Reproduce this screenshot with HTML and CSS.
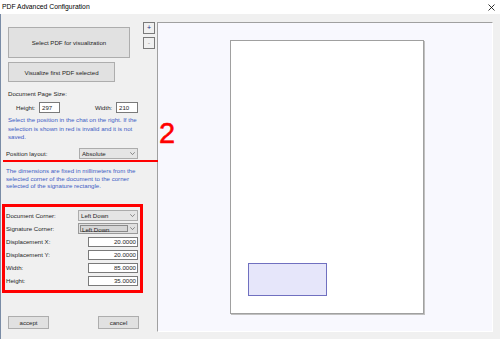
FILE: index.html
```html
<!DOCTYPE html>
<html>
<head>
<meta charset="utf-8">
<title>PDF Advanced Configuration</title>
<link rel="stylesheet" href="styles.css">
</head>
<body>
<div class="titlebar">
  <span class="title">PDF Advanced Configuration</span>
  <svg class="close" viewBox="0 0 7 7"><path d="M0.5 0.5 L6.5 6.5 M6.5 0.5 L0.5 6.5" stroke="#000" stroke-width="0.8" fill="none"/></svg>
</div>
<div class="main">
  <div class="left">
    <button class="btn btn-select">Select PDF for visualization</button>
    <button class="btn btn-visualize">Visualize first PDF selected</button>
    <div class="section-title">Document Page Size:</div>
    <div class="size-row">
      <span class="lbl lbl-height">Height:</span><span class="input input-h">297</span>
      <span class="lbl lbl-width">Width:</span><span class="input input-w">210</span>
    </div>
    <p class="hint hint1">Select the position in the chat on the right. If the<br>selection is shown in red is invalid and it is not<br>saved.</p>
    <div class="field-row pos-row">
      <span class="lbl">Position layout:</span>
      <span class="combo combo-pos"><span class="combo-text">Absolute</span><svg class="chev" viewBox="0 0 5 3"><path d="M0.3 0.3 L2.5 2.6 L4.7 0.3" stroke="#606060" stroke-width="0.7" fill="none"/></svg></span>
    </div>
    <p class="hint hint2">The dimensions are fixed in millimeters from the<br>selected corner of the document to the corner<br>selected of the signature rectangle.</p>
    <div class="redbox">
      <div class="field-row r1">
        <span class="lbl">Document Corner:</span>
        <span class="combo combo-wide"><span class="combo-text">Left Down</span><svg class="chev" viewBox="0 0 5 3"><path d="M0.3 0.3 L2.5 2.6 L4.7 0.3" stroke="#606060" stroke-width="0.7" fill="none"/></svg></span>
      </div>
      <div class="field-row r2">
        <span class="lbl">Signature Corner:</span>
        <span class="combo combo-wide combo-focus"><span class="combo-text">Left Down</span><span class="arrow-box"><svg class="chev" viewBox="0 0 5 3"><path d="M0.3 0.3 L2.5 2.6 L4.7 0.3" stroke="#606060" stroke-width="0.7" fill="none"/></svg></span></span>
      </div>
      <div class="field-row num-row">
        <span class="lbl">Displacement X:</span><span class="input input-num">20.0000</span>
      </div>
      <div class="field-row num-row">
        <span class="lbl">Displacement Y:</span><span class="input input-num">20.0000</span>
      </div>
      <div class="field-row num-row">
        <span class="lbl">Width:</span><span class="input input-num">85.0000</span>
      </div>
      <div class="field-row num-row">
        <span class="lbl">Height:</span><span class="input input-num">35.0000</span>
      </div>
    </div>
    <div class="actions">
      <button class="btn btn-small">accept</button>
      <button class="btn btn-small">cancel</button>
    </div>
  </div>
  <div class="zoom">
    <button class="zbtn zplus">+</button>
    <button class="zbtn zminus">-</button>
  </div>
  <div class="canvas">
    <div class="page">
      <div class="sig"></div>
    </div>
  </div>
</div>
<div class="anno-line"></div>
<div class="anno-2">2</div>
</body>
</html>
```

FILE: styles.css
```css
* {
  box-sizing: border-box;
  margin: 0;
  padding: 0;
}

html, body {
  width: 500px;
  height: 339px;
  overflow: hidden;
}

body {
  background: #f0f0f0;
  font-family: "Liberation Sans", Arial, sans-serif;
  color: #1e1e1e;
  position: relative;
}

.titlebar {
  height: 14px;
  background: #fff;
  display: flex;
  align-items: center;
  justify-content: space-between;
  padding: 0 5px 0 2px;
}

.title {
  font-size: 6.8px;
  line-height: 14px;
  color: #000;
}

.close {
  width: 7px;
  height: 7px;
}

.main {
  display: flex;
  align-items: flex-start;
  height: 325px;
}

.left {
  width: 143px;
  height: 325px;
  border-left: 1px solid #7a8ca6;
  padding: 13px 0 0 7px;
  display: flex;
  flex-direction: column;
  align-items: flex-start;
  font-size: 6.1px;
}

.btn {
  font-family: "Liberation Sans", Arial, sans-serif;
  font-size: 6.1px;
  color: #1e1e1e;
  background: #e1e1e1;
  border: 1px solid #adadad;
  display: flex;
  align-items: center;
  justify-content: center;
}

.btn-select {
  width: 122px;
  height: 31px;
}

.btn-visualize {
  width: 107px;
  height: 20px;
  margin-top: 4px;
}

.section-title {
  margin-top: 8px;
  height: 8px;
  line-height: 8px;
}

.size-row {
  margin-top: 4px;
  height: 11px;
  display: flex;
  align-items: center;
}

.lbl {
  white-space: nowrap;
  line-height: 8px;
}

.lbl-height {
  width: 31px;
  padding-left: 8px;
}

.lbl-width {
  width: 21px;
  margin-left: 35px;
}

.input {
  background: #fff;
  border: 1px solid #7a7a7a;
  height: 11px;
  line-height: 9px;
  padding: 0 2px;
  white-space: nowrap;
}

.input-h {
  width: 21px;
}

.input-w {
  width: 22px;
}

.hint {
  color: #3d5cc4;
  white-space: nowrap;
}

.hint1 {
  margin-top: 3px;
  line-height: 8.5px;
}

.field-row {
  display: flex;
  justify-content: space-between;
  align-items: center;
  height: 11px;
}

.pos-row {
  margin-top: 6.5px;
  margin-left: -2px;
  width: 132px;
}

.combo {
  height: 11px;
  background: #e5e5e5;
  border: 1px solid #acacac;
  display: flex;
  align-items: center;
  justify-content: space-between;
  padding: 0 2px 0 2px;
  line-height: 9px;
}

.combo-pos {
  width: 59px;
}

.chev {
  width: 5px;
  height: 3px;
  flex: none;
}

.hint2 {
  margin-top: 8.25px;
  margin-left: -2px;
  line-height: 7.5px;
}

.redbox {
  margin-top: 14.25px;
  margin-left: -6px;
  width: 141px;
  height: 89px;
  border: 3px solid #ff0000;
  padding: 3px 2px 0 1px;
  display: flex;
  flex-direction: column;
}

.combo-wide {
  width: 60px;
}

.r2 {
  margin-top: 2px;
}

.combo-focus {
  padding: 1px;
  background: #e0e0e0;
  border-color: #9a9a9a;
}

.combo-focus .combo-text {
  flex: 1;
  height: 100%;
  background: #d6d6d6;
  border: 1px solid #8a8a8a;
  line-height: 7px;
  padding-left: 1px;
  margin-right: 2px;
}

.arrow-box {
  display: flex;
  align-items: center;
  padding-right: 1px;
}

.num-row {
  margin-top: 3px;
  height: 10px;
}

.input-num {
  width: 50px;
  height: 10px;
  line-height: 8px;
  text-align: right;
  padding-right: 1px;
}

.actions {
  margin-top: 23px;
  width: 131px;
  display: flex;
  justify-content: space-between;
}

.btn-small {
  width: 41px;
  height: 13px;
}

.zoom {
  width: 14px;
  padding-top: 8px;
  display: flex;
  flex-direction: column;
  gap: 3px;
}

.zbtn {
  width: 12px;
  height: 12px;
  border: 1px solid #7a7a7a;
  background: #f0f0f0;
  font-family: "Liberation Sans", Arial, sans-serif;
  font-size: 7px;
  line-height: 10px;
  text-align: center;
  padding: 0;
}

.zplus {
  color: #1a2a80;
}

.zminus {
  color: #a0a0a0;
}

.canvas {
  margin-top: 8px;
  width: 336px;
  height: 310px;
  background: #f8f8fe;
  border-top: 1px solid #a0a0a0;
  border-left: 1px solid #a0a0a0;
  border-right: 1px solid #fff;
  border-bottom: 1px solid #fff;
  padding: 17px 0 0 72px;
}

.page {
  width: 194px;
  height: 274px;
  background: #fff;
  border: 1px solid #a0a0a0;
  box-shadow: 1px 1px 0 #c0c0c0;
  position: relative;
}

.sig {
  position: absolute;
  left: 17px;
  top: 222px;
  width: 79px;
  height: 33px;
  background: #e6e6fa;
  border: 1px solid #7070c0;
}

.anno-line {
  position: absolute;
  left: 3px;
  top: 160px;
  width: 155px;
  height: 2px;
  background: #ff0000;
}

.anno-2 {
  position: absolute;
  left: 159px;
  top: 119px;
  font-size: 29px;
  line-height: 29px;
  color: #ff0000;
  -webkit-text-stroke: 0.5px #ff0000;
}
```
